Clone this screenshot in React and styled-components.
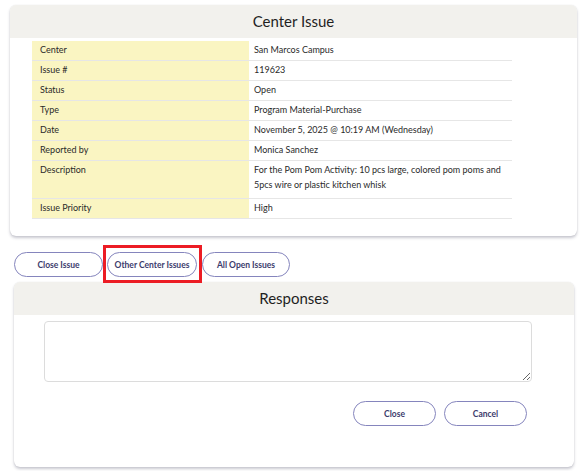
import React from 'react'
import styled, { createGlobalStyle } from 'styled-components'

const GlobalStyle = createGlobalStyle`
	html, body {
		margin: 0;
		padding: 0;
		background: #ffffff;
	}
	body {
		font-family: 'Lato', 'Open Sans', sans-serif;
		color: #222222;
	}
`

const Page = styled.div`
	width: 581px;
	height: 471px;
	padding-top: 5px;
	box-sizing: border-box;
	overflow: hidden;
`

const Card = styled.section`
	margin-left: ${({ $left }) => $left}px;
	width: ${({ $width }) => $width}px;
	height: ${({ $height }) => $height}px;
	box-sizing: border-box;
	background: #ffffff;
	border-radius: 6px;
	box-shadow: 0 2px 3px rgba(60, 60, 90, 0.28), 0 0 1px rgba(0, 0, 0, 0.15);
	overflow: hidden;
`

const CardHeader = styled.header`
	height: 33px;
	box-sizing: border-box;
	padding-bottom: 2px;
	background: #f2f1ed;
	display: flex;
	align-items: center;
	justify-content: center;
	font-size: 15px;
	color: #1f1f1f;
`

const Table = styled.div`
	margin: 3px 0 0 22px;
	width: 480px;
	font-size: 9px;
	color: #2a2a2a;
`

const Row = styled.div`
	display: grid;
	grid-template-columns: 217px 1fr;
	border-bottom: 1px solid #e6e6e6;
	height: ${({ $tall }) => ($tall ? 37 : 19)}px;
	overflow: hidden;
`

const Label = styled.div`
	background: #faf5c2;
	padding: 1px 8px 0;
	line-height: 15px;
`

const Value = styled.div`
	padding: 1px 5px 0;
	line-height: 15px;
	max-width: ${({ $wrap }) => ($wrap ? '255px' : 'none')};
`

const ButtonRow = styled.div`
	display: flex;
	gap: 4px;
	margin: 16px 0 5px 14px;
`

const Pill = styled.button`
	position: relative;
	width: ${({ $width }) => $width}px;
	height: 25px;
	margin-left: ${({ $offset }) => $offset || 0}px;
	border: 1px solid #8585bd;
	border-radius: 13px;
	background: #ffffff;
	font-family: 'Lato', 'Open Sans', sans-serif;
	font-weight: 700;
	font-size: 8.5px;
	color: #3c3c6c;
	padding: 0;
	cursor: pointer;
`

const Highlight = styled.span`
	position: relative;
	display: inline-flex;

	&::after {
		content: '';
		position: absolute;
		left: -4px;
		right: -5px;
		top: -7px;
		bottom: -6px;
		border: 3px solid #ec1c24;
		pointer-events: none;
	}
`

const ResponseBody = styled.div`
	padding: 6px 42px 0 30px;
	display: flex;
	flex-direction: column;
`

const TextArea = styled.textarea`
	height: 61px;
	box-sizing: border-box;
	border: 1px solid #dcdcdc;
	border-radius: 4px;
	resize: vertical;
	font-family: inherit;
`

const Actions = styled.div`
	display: flex;
	justify-content: flex-end;
	gap: 8px;
	margin: 19px 5px 0 0;
`

const rows = [
	['Center', 'San Marcos Campus'],
	['Issue #', '119623'],
	['Status', 'Open'],
	['Type', 'Program Material-Purchase'],
	['Date', 'November 5, 2025 @ 10:19 AM (Wednesday)'],
	['Reported by', 'Monica Sanchez'],
	[
		'Description',
		'For the Pom Pom Activity: 10 pcs large, colored pom poms and 5pcs wire or plastic kitchen whisk',
		true,
	],
	['Issue Priority', 'High'],
]

const App = () => {
	return (
		<>
			<GlobalStyle />
			<Page>
				<Card $left={10} $width={567} $height={231}>
					<CardHeader>Center Issue</CardHeader>
					<Table>
						{rows.map(([label, value, tall]) => (
							<Row key={label} $tall={tall}>
								<Label>{label}</Label>
								<Value $wrap={tall}>{value}</Value>
							</Row>
						))}
					</Table>
				</Card>

				<ButtonRow>
					<Pill $width={89}>Close Issue</Pill>
					<Highlight>
						<Pill $width={90}>Other Center Issues</Pill>
					</Highlight>
					<Pill $width={88} $offset={1}>
						All Open Issues
					</Pill>
				</ButtonRow>

				<Card $left={14} $width={560} $height={185}>
					<CardHeader>Responses</CardHeader>
					<ResponseBody>
						<TextArea />
						<Actions>
							<Pill $width={83}>Close</Pill>
							<Pill $width={83}>Cancel</Pill>
						</Actions>
					</ResponseBody>
				</Card>
			</Page>
		</>
	)
}

export default App
